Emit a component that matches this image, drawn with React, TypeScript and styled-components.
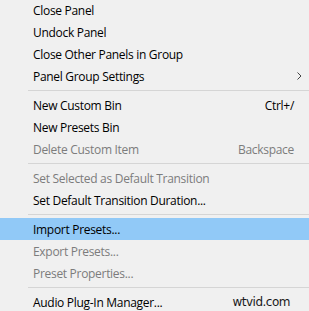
import React from "react"
import styled, { createGlobalStyle } from "styled-components"

const GlobalStyle = createGlobalStyle`
  html, body {
    margin: 0;
    padding: 0;
    background: #f0f0f0;
    overflow: hidden;
  }
`

const Menu = styled.div`
  width: 309px;
  height: 311px;
  margin-top: -1px;
  background: #f0f0f0;
  font-family: "Open Sans", "Noto Sans", sans-serif;
  font-size: 12px;
  letter-spacing: -0.3px;
  color: #000000;
  display: flex;
  flex-direction: column;
  position: relative;
`

const Item = styled.div<{ $disabled?: boolean; $active?: boolean }>`
  height: 22px;
  flex: 0 0 22px;
  display: flex;
  align-items: center;
  padding: 0 6px 0 33px;
  color: ${(p) => (p.$disabled ? "#7c7c7c" : "#000000")};
  background: ${(p) => (p.$active ? "#91c9f7" : "transparent")};
  white-space: nowrap;
`

const Label = styled.span`
  flex: 1;
`

const Shortcut = styled.span`
  margin: 0 9px 0 20px;
  text-align: right;
`

const Separator = styled.div`
  flex: 0 0 7px;
  display: flex;
  align-items: center;
  padding-left: 28px;

  &::after {
    content: "";
    flex: 1;
    height: 1px;
    background: #d5d5d5;
  }
`

const Chevron = styled.svg`
  width: 5px;
  height: 8px;
  margin-right: 1px;
`

const Watermark = styled.span`
  position: absolute;
  right: 19px;
  bottom: 1px;
  font-family: "DejaVu Sans", sans-serif;
  font-size: 12px;
  letter-spacing: -0.5px;
  color: #1a1a1a;
`

type Entry =
  | { sep: true }
  | {
      sep?: false
      label: string
      shortcut?: string
      disabled?: boolean
      active?: boolean
      submenu?: boolean
    }

const entries: Entry[] = [
  { label: "Close Panel" },
  { label: "Undock Panel" },
  { label: "Close Other Panels in Group" },
  { label: "Panel Group Settings", submenu: true },
  { sep: true },
  { label: "New Custom Bin", shortcut: "Ctrl+/" },
  { label: "New Presets Bin" },
  { label: "Delete Custom Item", shortcut: "Backspace", disabled: true },
  { sep: true },
  { label: "Set Selected as Default Transition", disabled: true },
  { label: "Set Default Transition Duration..." },
  { sep: true },
  { label: "Import Presets...", active: true },
  { label: "Export Presets...", disabled: true },
  { label: "Preset Properties...", disabled: true },
  { sep: true },
  { label: "Audio Plug-In Manager..." },
]

const App: React.FC = () => {
  return (
    <>
      <GlobalStyle />
      <Menu>
        {entries.map((e, i) =>
          e.sep ? (
            <Separator key={i} />
          ) : (
            <Item key={i} $disabled={e.disabled} $active={e.active}>
              <Label>{e.label}</Label>
              {e.shortcut && <Shortcut>{e.shortcut}</Shortcut>}
              {e.submenu && (
                <Chevron viewBox="0 0 5 8">
                  <path d="M0.5 0.5 L4 4 L0.5 7.5" fill="none" stroke="#444" strokeWidth="1" />
                </Chevron>
              )}
            </Item>
          )
        )}
        <Watermark>wtvid.com</Watermark>
      </Menu>
    </>
  )
}

export default App
